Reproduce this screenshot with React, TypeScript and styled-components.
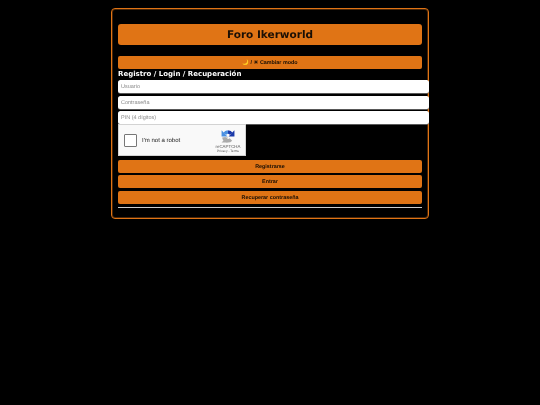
import styled, { createGlobalStyle } from 'styled-components';

const GlobalStyle = createGlobalStyle`
    html, body {
        margin: 0;
        background-color: #000;
    }
    body {
        padding-top: 8px;
        font-family: "Liberation Sans", Arial, sans-serif;
        text-rendering: geometricPrecision;
    }
`;

const Container = styled.div`
    box-sizing: border-box;
    width: 318px;
    height: 211px;
    margin: 0 auto;
    padding: 15px 6px 0;
    border: 1px solid #e07415;
    border-radius: 4px;
    background-color: #000;
    box-shadow: inset 0 0 0 1px #4a2607;
`;

const Title = styled.h1`
    height: 21px;
    margin: 0 0 11px;
    border-radius: 3px;
    background-color: #e07415;
    color: #1a0f05;
    font-family: "DejaVu Sans", Verdana, sans-serif;
    font-size: 10.5px;
    font-weight: bold;
    line-height: 23px;
    text-align: center;
    will-change: transform;
`;

const Button = styled.button`
    display: block;
    width: 100%;
    height: 13px;
    padding: 1px 0 0;
    border: 0;
    border-radius: 2px;
    background-color: #e07415;
    color: #1a0f05;
    font-family: "Liberation Sans", Arial, sans-serif;
    font-size: 5.4px;
    font-weight: bold;
    line-height: 12px;
    text-align: center;
    text-rendering: geometricPrecision;
    will-change: transform;
`;

const ButtonStack = styled.div`
    display: flex;
    flex-direction: column;
    gap: 2.8px;
    margin-top: 3.5px;
`;

const Heading = styled.h2`
    height: 11px;
    margin: 0;
    color: #fff;
    font-family: "DejaVu Sans", Verdana, sans-serif;
    font-size: 7px;
    font-weight: bold;
    line-height: 10px;
    will-change: transform;
`;

const Form = styled.div`
    display: flex;
    flex-direction: column;
    gap: 2.5px;
    width: 311px;
`;

const Input = styled.input`
    box-sizing: border-box;
    width: 100%;
    height: 13px;
    padding: 0 3px;
    border: 0;
    border-radius: 2.5px;
    background-color: #fff;
    box-shadow: 0 0.7px 0 #777;
    font-family: "Liberation Sans", Arial, sans-serif;
    font-size: 5.5px;
    text-rendering: geometricPrecision;
    will-change: transform;

    &::placeholder {
        color: #8a8a8a;
    }
`;

const Captcha = styled.div`
    display: flex;
    align-items: center;
    box-sizing: border-box;
    width: 128px;
    height: 32px;
    padding: 0 4px 0 5px;
    background-color: #f9f9f9;
    border: 0.5px solid #d3d3d3;
    will-change: transform;
`;

const CheckBox = styled.div`
    box-sizing: border-box;
    width: 13px;
    height: 13px;
    border: 1px solid #777;
    border-radius: 1px;
    background-color: #fff;
`;

const CaptchaLabel = styled.span`
    flex: 1;
    margin-left: 5px;
    padding-top: 1px;
    color: #222;
    font-size: 6px;
`;

const CaptchaBrand = styled.div`
    display: flex;
    flex-direction: column;
    align-items: center;
    width: 26px;
    padding-top: 3px;
    color: #555;
`;

const BrandName = styled.span`
    margin-top: 1px;
    font-size: 4.4px;
    line-height: 5px;
`;

const BrandLinks = styled.span`
    font-size: 3.2px;
    line-height: 5px;
    white-space: nowrap;
`;

const Rule = styled.hr`
    height: 1px;
    margin: 3px 0 0;
    border: 0;
    background-color: #ccc;
`;

const CaptchaLogo = () => (
    <svg width="14" height="14" viewBox="0 0 24 24" fill="none" strokeWidth="6" aria-hidden="true">
        <path d="M12 5a7 7 0 0 1 5.500 3.500" stroke="#1c3aa9" />
        <polygon points="23,2 23,13 13,13" fill="#1c3aa9" />
        <path d="M12 5a7 7 0 0 0-5.500 3.500" stroke="#4a90e2" />
        <polygon points="1,2 1,13 11,13" fill="#4a90e2" />
        <path d="M5 14a7 7 0 0 0 12 4" stroke="#ababab" />
        <polygon points="11,13 11,23 1,23" fill="#ababab" />
    </svg>
);

const App = () => (
    <>
        <GlobalStyle />
        <Container>
            <Title>Foro Ikerworld</Title>
            <Button>🌙 / ☀ Cambiar modo</Button>
            <Heading>Registro / Login / Recuperación</Heading>
            <Form>
                <Input placeholder="Usuario" />
                <Input placeholder="Contraseña" />
                <Input placeholder="PIN (4 dígitos)" />
            </Form>
            <Captcha>
                <CheckBox />
                <CaptchaLabel>I'm not a robot</CaptchaLabel>
                <CaptchaBrand>
                    <CaptchaLogo />
                    <BrandName>reCAPTCHA</BrandName>
                    <BrandLinks>Privacy - Terms</BrandLinks>
                </CaptchaBrand>
            </Captcha>
            <ButtonStack>
                <Button>Registrarse</Button>
                <Button>Entrar</Button>
                <Button>Recuperar contraseña</Button>
            </ButtonStack>
            <Rule />
        </Container>
    </>
);

export default App;
